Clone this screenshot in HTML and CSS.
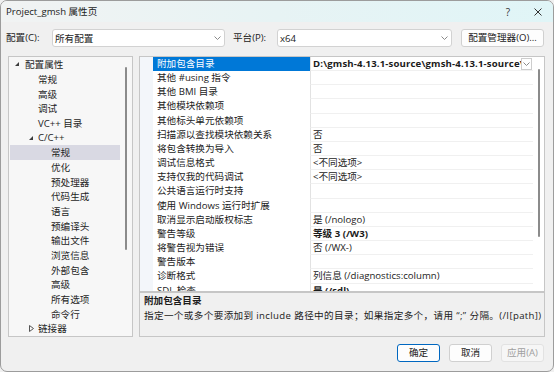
FILE: index.html
```html
<!DOCTYPE html>
<html lang="zh-CN">
<head>
<meta charset="utf-8">
<title>Project_gmsh 属性页</title>
<link rel="stylesheet" href="styles.css">
</head>
<body>
<div class="window">
  <div class="titlebar">
    <span class="title">Project_gmsh 属性页</span>
    <div class="caption">
      <span class="cap-btn help">?</span>
      <span class="cap-btn close"><svg width="8" height="8" viewBox="0 0 8 8"><path d="M0.5 0.5L7.5 7.5M7.5 0.5L0.5 7.5" stroke="#333" stroke-width="1" fill="none"/></svg></span>
    </div>
  </div>

  <div class="toolbar">
    <span class="lbl lbl1">配置(C):</span>
    <div class="combo combo1"><span class="combo-text">所有配置</span><svg class="chev" width="7" height="4" viewBox="0 0 7 4"><path d="M0.5 0.5L3.5 3.5L6.5 0.5" stroke="#8a8a8a" fill="none"/></svg></div>
    <span class="lbl lbl2">平台(P):</span>
    <div class="combo combo2"><span class="combo-text">x64</span><svg class="chev" width="7" height="4" viewBox="0 0 7 4"><path d="M0.5 0.5L3.5 3.5L6.5 0.5" stroke="#8a8a8a" fill="none"/></svg></div>
    <button class="btn mgr">配置管理器(O)...</button>
  </div>

  <div class="main">
    <div class="tree">
      <ul class="tree-list">
        <li class="trow l0a"><span class="arrow"><svg class="exp" width="4" height="4" viewBox="0 0 4 4"><path d="M4 0L4 4L0 4Z" fill="#3c3c3c"/></svg></span>配置属性</li>
        <li class="trow l1">常规</li>
        <li class="trow l1">高级</li>
        <li class="trow l1">调试</li>
        <li class="trow l1">VC++ 目录</li>
        <li class="trow l1a"><span class="arrow"><svg class="exp2" width="4" height="4" viewBox="0 0 4 4"><path d="M4 0L4 4L0 4Z" fill="#3c3c3c"/></svg></span>C/C++</li>
        <li class="trow l2 sel">常规</li>
        <li class="trow l2">优化</li>
        <li class="trow l2">预处理器</li>
        <li class="trow l2">代码生成</li>
        <li class="trow l2">语言</li>
        <li class="trow l2">预编译头</li>
        <li class="trow l2">输出文件</li>
        <li class="trow l2">浏览信息</li>
        <li class="trow l2">外部包含</li>
        <li class="trow l2">高级</li>
        <li class="trow l2">所有选项</li>
        <li class="trow l2">命令行</li>
        <li class="trow l1a"><span class="arrow"><svg class="col" width="5" height="7" viewBox="0 0 5 7"><path d="M0.5 0.5L4.5 3.5L0.5 6.5Z" stroke="#555" stroke-width="1" fill="none"/></svg></span>链接器</li>
      </ul>
      <div class="vscroll tree-scroll"><div class="thumb tree-thumb"></div></div>
    </div>

    <div class="right">
      <div class="grid">
        <div class="margin-col"></div>
        <div class="rows">
          <div class="prop selrow"><div class="pname">附加包含目录</div><div class="pval drop"><span class="vtext b path">D:\gmsh-4.13.1-source\gmsh-4.13.1-source\</span><span class="dd"><svg width="7" height="4" viewBox="0 0 7 4"><path d="M0.5 0.5L3.5 3.5L6.5 0.5" stroke="#8a8a8a" fill="none"/></svg></span></div></div>
          <div class="prop"><div class="pname">其他 #using 指令</div><div class="pval"></div></div>
          <div class="prop"><div class="pname">其他 BMI 目录</div><div class="pval"></div></div>
          <div class="prop"><div class="pname">其他模块依赖项</div><div class="pval"></div></div>
          <div class="prop"><div class="pname">其他标头单元依赖项</div><div class="pval"></div></div>
          <div class="prop"><div class="pname">扫描源以查找模块依赖关系</div><div class="pval">否</div></div>
          <div class="prop"><div class="pname">将包含转换为导入</div><div class="pval">否</div></div>
          <div class="prop"><div class="pname">调试信息格式</div><div class="pval">&lt;不同选项&gt;</div></div>
          <div class="prop"><div class="pname">支持仅我的代码调试</div><div class="pval">&lt;不同选项&gt;</div></div>
          <div class="prop"><div class="pname">公共语言运行时支持</div><div class="pval"></div></div>
          <div class="prop"><div class="pname">使用 Windows 运行时扩展</div><div class="pval"></div></div>
          <div class="prop"><div class="pname">取消显示启动版权标志</div><div class="pval">是 (/nologo)</div></div>
          <div class="prop"><div class="pname">警告等级</div><div class="pval b">等级 3 (/W3)</div></div>
          <div class="prop"><div class="pname">将警告视为错误</div><div class="pval">否 (/WX-)</div></div>
          <div class="prop"><div class="pname">警告版本</div><div class="pval"></div></div>
          <div class="prop"><div class="pname">诊断格式</div><div class="pval">列信息 (/diagnostics:column)</div></div>
          <div class="prop"><div class="pname">SDL 检查</div><div class="pval b">是 (/sdl)</div></div>
        </div>
        <div class="vscroll grid-scroll"><div class="thumb grid-thumb"></div></div>
      </div>
      <div class="desc">
        <div class="desc-title">附加包含目录</div>
        <div class="desc-text">指定一个或多个要添加到 include 路径中的目录；如果指定多个，请用 “;” 分隔。(/I[path])</div>
      </div>
    </div>
  </div>

  <div class="footer">
    <button class="btn fbtn default">确定</button>
    <button class="btn fbtn">取消</button>
    <button class="btn fbtn disabled">应用(A)</button>
  </div>
</div>
</body>
</html>
```

FILE: styles.css
```css
* { box-sizing: border-box; }
html, body { margin: 0; padding: 0; }
body {
  font-family: "Open Sans", "Noto Sans CJK SC", sans-serif;
  font-size: 9.6px;
  color: #1b1b1b;
  background: #f0f0f0;
}
.window {
  width: 554px;
  height: 372px;
  border: 1px solid #9c9c9c;
  border-radius: 7px;
  overflow: hidden;
  background: #f0f0f0;
  display: flex;
  flex-direction: column;
}
.titlebar {
  height: 21px;
  flex: none;
  display: flex;
  align-items: center;
  padding-left: 5px;
  background: linear-gradient(90deg, #f1f3f3 0%, #e7f3f4 50%, #e0f5f7 100%);
}
.title { flex: 1; line-height: 21px; white-space: nowrap; }
.caption { display: flex; align-items: center; height: 21px; }
.cap-btn {
  width: 30px;
  height: 21px;
  display: flex;
  align-items: center;
  justify-content: center;
  color: #333;
}
.help { font-size: 10px; }

.toolbar {
  display: flex;
  align-items: center;
  height: 18px;
  margin-top: 7px;
  padding-left: 5px;
  flex: none;
}
.lbl { white-space: nowrap; line-height: 18px; }
.lbl1 { width: 46px; }
.lbl2 { width: 44px; margin-left: 8px; }
.combo {
  height: 18px;
  background: #fff;
  border: 1px solid #d2d2d2;
  border-radius: 3px;
  display: flex;
  align-items: center;
  padding: 0 2px 0 2px;
}
.combo1 { width: 173px; }
.combo2 { width: 175px; }
.combo-text { flex: 1; white-space: nowrap; }
.chev { flex: none; margin-right: 1px; }
.btn {
  font: inherit;
  color: #1b1b1b;
  background: #fdfdfd;
  border: 1px solid #d0d0d0;
  border-radius: 3px;
  height: 18px;
  padding: 0;
  line-height: 16px;
  white-space: nowrap;
}
.mgr { width: 83px; margin-left: 9px; }

.main {
  display: flex;
  gap: 6px;
  margin-top: 9px;
  height: 281px;
  padding-left: 7px;
  flex: none;
}
.tree {
  width: 125px;
  border: 1px solid #c6c6c6;
  background: #f7f7f7;
  display: flex;
}
.tree-list {
  flex: 1;
  list-style: none;
  margin: 0;
  padding: 0;
  overflow: hidden;
}
.trow {
  height: 14.68px;
  display: flex;
  align-items: center;
  margin: 0 1px;
  white-space: nowrap;
  color: #1e1e1e;
}
.trow.sel { background: #d9d9e3; }
.arrow {
  width: 11px;
  height: 14px;
  display: flex;
  align-items: center;
  flex: none;
}
.l0a { padding-left: 4px; }
.l0a .arrow { padding-left: 1px; }
.l1 { padding-left: 28px; }
.l1a { padding-left: 17px; }
.l1a .arrow { padding-left: 2px; }
.l2 { padding-left: 41px; }

.vscroll { width: 11px; flex: none; }
.thumb { width: 2px; background: #8b8b8b; border-radius: 1px; }
.tree-scroll { padding-top: 10px; padding-left: 4px; }
.tree-thumb { height: 183px; }

.right {
  width: 406px;
  display: flex;
  flex-direction: column;
}
.grid {
  height: 236px;
  border: 1px solid #c6c6c6;
  background: #fff;
  display: flex;
  flex: none;
  overflow: hidden;
}
.margin-col { width: 13px; flex: none; background: #f3f6fa; }
.rows { flex: 1; overflow: hidden; }
.prop {
  display: grid;
  grid-template-columns: 157px 1fr;
  height: 14.17px;
}
.pname {
  padding-left: 4px;
  line-height: 14.17px;
  white-space: nowrap;
  overflow: hidden;
}
.pval {
  border-left: 1px solid #e2e2e2;
  border-bottom: 1px solid #f0f0f0;
  padding-left: 2px;
  line-height: 13.17px;
  white-space: nowrap;
  overflow: hidden;
}
.b { font-weight: 700; }
.path { letter-spacing: 0.15px; }
.selrow .pname { background: #0078d7; color: #fff; }
.drop { display: flex; align-items: center; }
.vtext { flex: 1; overflow: hidden; white-space: nowrap; }
.dd {
  flex: none;
  width: 11px;
  height: 12px;
  margin-right: 1px;
  border: 1px solid #cdcdcd;
  background: #fff;
  display: flex;
  align-items: center;
  justify-content: center;
}
.grid-scroll { padding-top: 12px; padding-left: 5px; }
.grid-thumb { height: 168px; }

.desc {
  height: 45px;
  border: 1px solid #c6c6c6;
  background: #f0f0f0;
  padding: 1px 0 0 4px;
  flex: none;
}
.desc-title { font-weight: 700; line-height: 14px; white-space: nowrap; }
.desc-text { line-height: 15px; white-space: nowrap; letter-spacing: 0.36px; }

.footer {
  display: flex;
  justify-content: flex-end;
  gap: 9px;
  margin-top: 7px;
  padding-right: 9px;
  flex: none;
}
.fbtn { width: 43px; }
.default { border-color: #0067c0; }
.disabled { color: #a0a0a0; background: #f6f6f6; border-color: #e2e2e2; }
```
